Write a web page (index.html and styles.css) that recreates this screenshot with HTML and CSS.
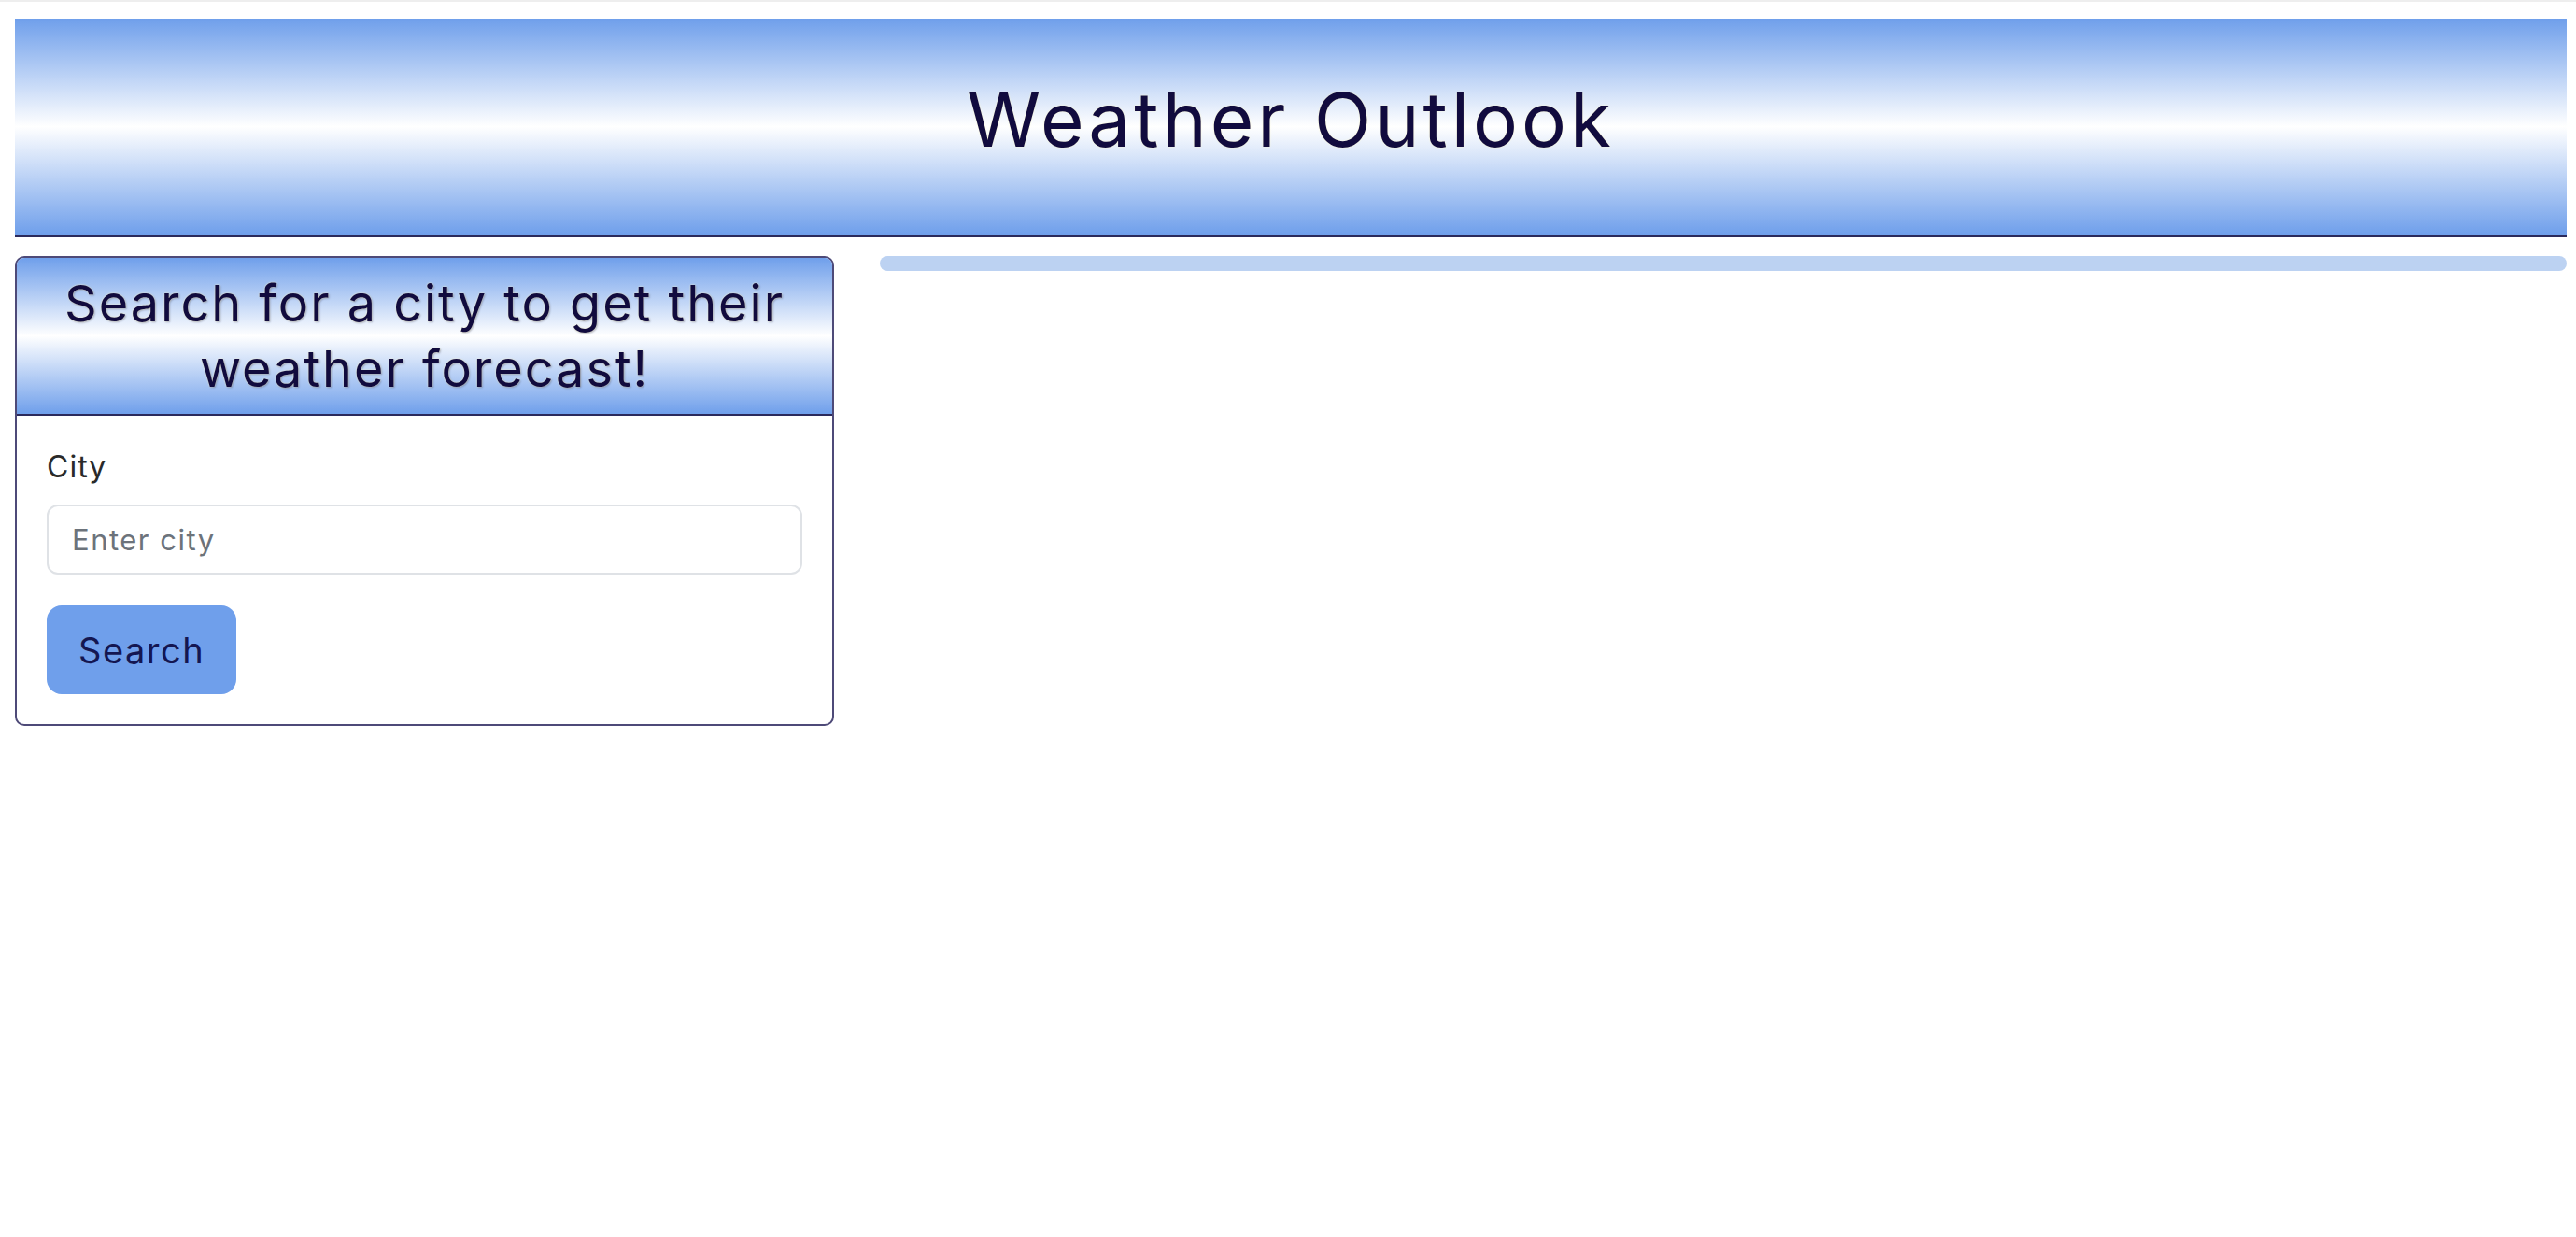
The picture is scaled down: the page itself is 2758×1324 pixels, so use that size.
FILE: index.html
```html
<!DOCTYPE html>
<html lang="en">
<head>
<meta charset="utf-8">
<title>Weather Outlook</title>
<link rel="stylesheet" href="styles.css">
</head>
<body>
<div class="page">
  <header class="site-header">
    <h1 class="site-title">Weather Outlook</h1>
  </header>
  <main class="main-row">
    <section class="search-card">
      <div class="search-card-header">
        <h2 class="search-card-title">Search for a city to get their weather forecast!</h2>
      </div>
      <form class="search-card-body">
        <label class="field-label" for="city">City</label>
        <input class="field-input" id="city" type="text" placeholder="Enter city">
        <button class="search-btn" type="button">Search</button>
      </form>
    </section>
    <section class="results">
      <div class="progress-track"></div>
    </section>
  </main>
</div>
</body>
</html>
```

FILE: styles.css
```css
html {
  border-top: 2px solid #eeeeee;
}
body {
  margin: 0;
  background: #ffffff;
  font-family: "Inter", "Noto Sans", sans-serif;
  color: #0f0a3c;
}
.page {
  padding: 18px 10px 0 16px;
}
.site-header {
  height: 231px;
  border-bottom: 3px solid #2b2a5c;
  background: linear-gradient(to bottom, #6f9feb 0%, #ffffff 50%, #6f9feb 100%);
  display: flex;
  align-items: center;
  justify-content: center;
}
.site-title {
  margin: 0 0 16px 0;
  font-size: 80px;
  font-weight: 400;
  letter-spacing: 4px;
  color: #110b3e;
  text-shadow: 0 0 2px #fbf7c8;
}
.main-row {
  display: flex;
  align-items: flex-start;
  gap: 49px;
  margin-top: 20px;
}
.search-card {
  width: 877px;
  flex: 0 0 877px;
  box-sizing: border-box;
  border: 2px solid #4e4a78;
  border-radius: 10px;
  overflow: hidden;
}
.search-card-header {
  height: 169px;
  box-sizing: border-box;
  border-bottom: 2px solid #2b2a5c;
  background: linear-gradient(to bottom, #6f9feb 0%, #ffffff 50%, #6f9feb 100%);
  display: flex;
  align-items: center;
  justify-content: center;
  padding: 0 16px;
}
.search-card-title {
  margin: 0;
  text-align: center;
  font-size: 54px;
  font-weight: 400;
  line-height: 70px;
  letter-spacing: 2px;
  color: #110b3e;
  text-shadow: 0 0 2px #fbf7c8, 1px 1px 2px rgba(20, 20, 60, 0.35);
}
.search-card-body {
  display: flex;
  flex-direction: column;
  align-items: flex-start;
  padding: 35px 32px 32px 32px;
}
.field-label {
  font-size: 32px;
  line-height: 40px;
  letter-spacing: 1px;
  color: #2a2a2a;
  margin-bottom: 20px;
}
.field-input {
  align-self: stretch;
  box-sizing: border-box;
  height: 75px;
  border: 2px solid #dfe2e6;
  border-radius: 12px;
  padding: 0 25px;
  font-family: "Inter", "Noto Sans", sans-serif;
  font-size: 31px;
  letter-spacing: 1.5px;
  color: #212529;
  background: #ffffff;
  outline: none;
}
.field-input::placeholder {
  color: #6c737b;
}
.search-btn {
  margin-top: 33px;
  height: 95px;
  padding: 0 34px;
  border: none;
  border-radius: 16px;
  background: #6f9feb;
  color: #141651;
  font-family: "Inter", "Noto Sans", sans-serif;
  font-size: 38px;
  letter-spacing: 1.5px;
  cursor: pointer;
}
.results {
  flex: 1;
}
.progress-track {
  height: 16px;
  border-radius: 8px;
  background: #bcd2f2;
}
```
